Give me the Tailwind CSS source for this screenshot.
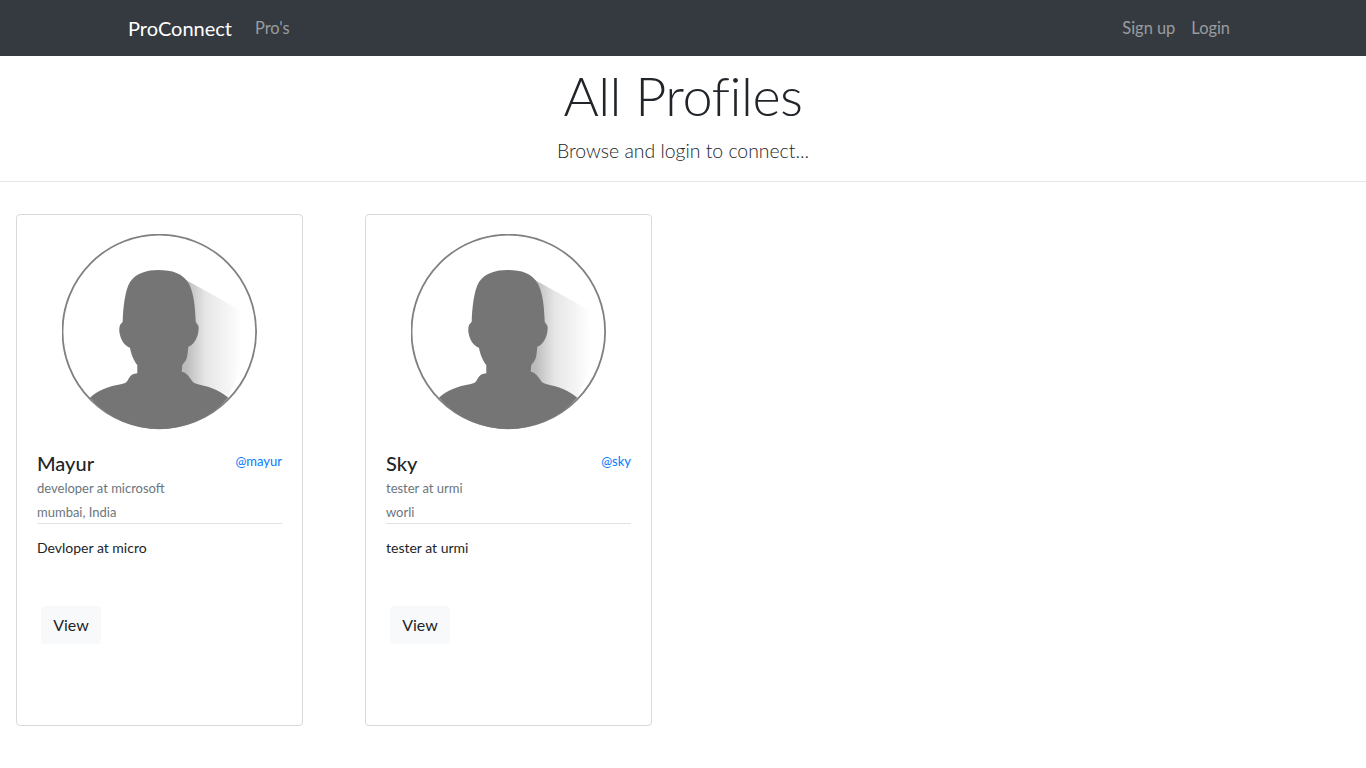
<!DOCTYPE html>
<html lang="en">
  <head>
    <meta charset="UTF-8" />
    <meta name="viewport" content="width=device-width, initial-scale=1.0" />
    <title>ProConnect - All Profiles</title>
    <script src="https://cdn.jsdelivr.net/npm/@tailwindcss/browser@4"></script>
  </head>
  <body class="bg-white text-[#212529] font-['Lato',sans-serif] min-h-screen">
    <nav class="bg-[#343a40] h-14">
      <div class="w-[1140px] mx-auto pl-[15px] pr-[23px] h-full flex items-center">
        <a href="#" class="text-white text-xl mr-[23px]">ProConnect</a>
        <a href="#" class="text-white/50 text-[16.4px] mt-[1px]">Pro's</a>
        <div class="flex-grow"></div>
        <a href="#" class="text-white/50 text-[16.4px] mr-4 mt-[1px]">Sign up</a>
        <a href="#" class="text-white/50 text-[16.4px] mt-[1px]">Login</a>
      </div>
    </nav>

    <header class="text-center h-[126px] border-b border-[#e5e5e5]">
      <h1 class="text-[54px] tracking-[-0.5px] font-light leading-[67px] pt-[6px] h-[75px]">All Profiles</h1>
      <p class="text-[19.4px] font-light leading-[30px] mt-[5px]">Browse and login to connect...</p>
    </header>

    <main class="flex gap-[62px] pl-4 pt-8">
      <!-- Mayur -->
      <div class="w-[287px] h-[512px] border border-[#d9d9d9] rounded p-5 flex flex-col">
        <svg class="w-[196px] h-[197px] mx-auto shrink-0 -mt-[1px]" viewBox="0 0 196 197">
          <defs>
            <linearGradient id="shade-1" x1="124" y1="0" x2="180" y2="0" gradientUnits="userSpaceOnUse">
              <stop offset="0" stop-color="#bbbbbb" />
              <stop offset="0.35" stop-color="#e6e6e6" />
              <stop offset="1" stop-color="#ffffff" />
            </linearGradient>
          </defs>
          <path d="M124 46 L178 76 L180 130 L166 164 L118 150 Z" fill="url(#shade-1)" />
          <circle cx="97.3" cy="97.5" r="96.8" fill="none" stroke="#808080" stroke-width="1.8" />
          <path d="M96.3 36 C85 36 74 39 68 48 C63 56 61 75 60.7 87.7 L58 91 C57 94 57 98 58 101 C59.5 107 63 112 68 113.7 C69 120 72 127 75.3 131 L75.3 139.3 C71 139.5 69 141 67 144 C65 148 64 149 60 150 C46 152.5 36 156 28 163.7 A92 92 0 0 0 166.3 163.7 C157 156 148 153 135 150 C131 149 130 147 128 144 C126 141 123 138 119.7 137.7 L120.3 131 C123 128 125.5 124 125.5 120 C126 117 126 115 126.3 112.7 C130 111.5 133 108 135 103 C136.5 99 136.8 95 136.5 92 L133.7 87.7 C133 72 132 60 127 50 C121 39 110 36 96.3 36 Z" fill="#757575" />
        </svg>
        <div class="flex justify-between items-start mt-[20px]">
          <h5 class="text-xl font-medium leading-6">Mayur</h5>
          <a href="#" class="text-[#007bff] text-[13px] leading-5">@mayur</a>
        </div>
        <p class="text-[#6c757d] text-[13px] leading-[18px] mt-[4px]">developer at microsoft</p>
        <p class="text-[#6c757d] text-[13px] leading-[18px] mt-[6px] pb-[2px] border-b border-[#e2e2e2]">mumbai, India</p>
        <p class="text-sm leading-5 mt-[14px]">Devloper at micro</p>
        <a href="#" class="bg-[#f8f9fa] rounded w-[60px] h-[38px] ml-1 mt-[48px] flex items-center justify-center text-base">View</a>
      </div>

      <!-- Sky -->
      <div class="w-[287px] h-[512px] border border-[#d9d9d9] rounded p-5 flex flex-col">
        <svg class="w-[196px] h-[197px] mx-auto shrink-0 -mt-[1px]" viewBox="0 0 196 197">
          <defs>
            <linearGradient id="shade-2" x1="124" y1="0" x2="180" y2="0" gradientUnits="userSpaceOnUse">
              <stop offset="0" stop-color="#bbbbbb" />
              <stop offset="0.35" stop-color="#e6e6e6" />
              <stop offset="1" stop-color="#ffffff" />
            </linearGradient>
          </defs>
          <path d="M124 46 L178 76 L180 130 L166 164 L118 150 Z" fill="url(#shade-2)" />
          <circle cx="97.3" cy="97.5" r="96.8" fill="none" stroke="#808080" stroke-width="1.8" />
          <path d="M96.3 36 C85 36 74 39 68 48 C63 56 61 75 60.7 87.7 L58 91 C57 94 57 98 58 101 C59.5 107 63 112 68 113.7 C69 120 72 127 75.3 131 L75.3 139.3 C71 139.5 69 141 67 144 C65 148 64 149 60 150 C46 152.5 36 156 28 163.7 A92 92 0 0 0 166.3 163.7 C157 156 148 153 135 150 C131 149 130 147 128 144 C126 141 123 138 119.7 137.7 L120.3 131 C123 128 125.5 124 125.5 120 C126 117 126 115 126.3 112.7 C130 111.5 133 108 135 103 C136.5 99 136.8 95 136.5 92 L133.7 87.7 C133 72 132 60 127 50 C121 39 110 36 96.3 36 Z" fill="#757575" />
        </svg>
        <div class="flex justify-between items-start mt-[20px]">
          <h5 class="text-xl font-medium leading-6">Sky</h5>
          <a href="#" class="text-[#007bff] text-[13px] leading-5">@sky</a>
        </div>
        <p class="text-[#6c757d] text-[13px] leading-[18px] mt-[4px]">tester at urmi</p>
        <p class="text-[#6c757d] text-[13px] leading-[18px] mt-[6px] pb-[2px] border-b border-[#e2e2e2]">worli</p>
        <p class="text-sm leading-5 mt-[14px]">tester at urmi</p>
        <a href="#" class="bg-[#f8f9fa] rounded w-[60px] h-[38px] ml-1 mt-[48px] flex items-center justify-center text-base">View</a>
      </div>
    </main>
  </body>
</html>
